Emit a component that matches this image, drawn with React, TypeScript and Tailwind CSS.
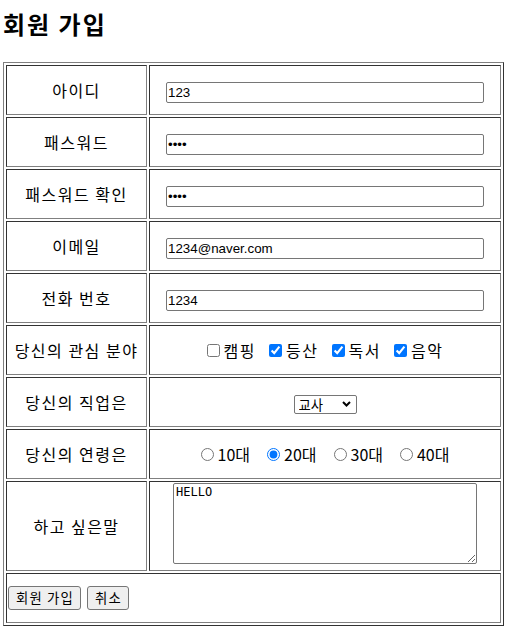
import React from 'react';

const cell =
  'border border-t-[#333333] border-l-[#333333] border-r-[#808080] border-b-[#808080] p-px';

const textInput =
  "w-[318px] h-[21px] border border-[#767676] rounded-[2px] px-px text-[13.33px] bg-white font-['Liberation_Sans','Noto_Sans_CJK_KR',sans-serif] text-black outline-none";

const btn =
  'h-[24px] pl-[7px] pr-[6px] border border-[#767676] rounded-[3px] bg-[#efefef] text-[13.33px] leading-[20px] tracking-[1.2px]';

function Row({ label, children }: { label: string; children: React.ReactNode }) {
  return (
    <tr>
      <td className={`${cell} h-[50px] w-[141px] text-center align-middle text-[16px] tracking-[1.5px]`}>{label}</td>
      <td className={`${cell} h-[50px] w-[352px] text-center align-middle`}>{children}</td>
    </tr>
  );
}

export default function App() {
  const hobbies = [
    { name: '캠핑', checked: false },
    { name: '등산', checked: true },
    { name: '독서', checked: true },
    { name: '음악', checked: true },
  ];
  const ages = ['10대', '20대', '30대', '40대'];

  return (
    <div className="w-[509px] h-[635px] bg-white pl-[3px] text-black font-['Noto_Sans_CJK_KR',sans-serif]">
      <h2 className="mt-[10px] mb-[24px] text-[24px] leading-[28px] font-bold tracking-[2px]">회원 가입</h2>

      <table className="table-fixed w-[501px] border-separate border-spacing-[2px] border border-t-[#808080] border-l-[#808080] border-r-[#333333] border-b-[#333333]">
        <tbody>
          <Row label="아이디">
            <input type="text" defaultValue="123" className={`${textInput} bg-[#e8f0fe] align-middle`} />
          </Row>
          <Row label="패스워드">
            <input type="password" defaultValue="1234" className={`${textInput} align-middle`} />
          </Row>
          <Row label="패스워드 확인">
            <input type="password" defaultValue="1234" className={`${textInput} align-middle`} />
          </Row>
          <Row label="이메일">
            <input type="email" defaultValue="1234@naver.com" className={`${textInput} align-middle`} />
          </Row>
          <Row label="전화 번호">
            <input type="tel" defaultValue="1234" className={`${textInput} align-middle`} />
          </Row>

          {/* 관심 분야 체크박스 */}
          <Row label="당신의 관심 분야">
            <div className="flex justify-center items-center gap-[13px] text-[16px] tracking-[1.5px]">
              {hobbies.map((h) => (
                <label key={h.name} className="flex items-center">
                  <input type="checkbox" defaultChecked={h.checked} className="m-0 w-[13px] h-[13px]" />
                  <span className="ml-[4px] leading-[20px]">{h.name}</span>
                </label>
              ))}
            </div>
          </Row>

          <Row label="당신의 직업은">
            <div className="relative inline-flex align-middle tracking-normal">
              <select
                defaultValue="교사"
                className="appearance-none w-[63px] h-[19px] border border-[#767676] rounded-[2px] bg-white pl-[4px] text-[13.33px] leading-[17px] text-black outline-none"
              >
                <option>교사</option>
                <option>학생</option>
                <option>의사</option>
              </select>
              <svg
                className="absolute right-[6px] top-[6px] pointer-events-none"
                width="9"
                height="6"
                viewBox="0 0 9 6"
              >
                <path d="M1 1 L4.5 4.5 L8 1" fill="none" stroke="#000" strokeWidth="2" />
              </svg>
            </div>
          </Row>

          {/* 연령 라디오 */}
          <Row label="당신의 연령은">
            <div className="flex justify-center items-center gap-[17px] text-[16px] tracking-normal">
              {ages.map((a) => (
                <label key={a} className="flex items-center">
                  <input type="radio" name="age" defaultChecked={a === '20대'} className="m-0 w-[13px] h-[13px]" />
                  <span className="ml-[4px] leading-[20px]">{a}</span>
                </label>
              ))}
            </div>
          </Row>

          <tr>
            <td className={`${cell} h-[90px] w-[141px] text-center align-middle text-[16px] tracking-[1.5px]`}>하고 싶은말</td>
            <td className={`${cell} h-[90px] w-[352px] align-top`}>
              <textarea
                defaultValue="HELLO"
                className="block mx-auto w-[304px] h-[81px] border border-[#767676] rounded-[2px] px-[2px] py-px text-[12px] leading-[15px] bg-white text-black font-['DejaVu_Sans_Mono',monospace] outline-none"
              />
            </td>
          </tr>

          <tr>
            <td colSpan={2} className={`${cell} h-[50px] align-middle`}>
              <div className="flex items-center gap-[6px]">
                <button className={btn}>회원 가입</button>
                <button className={btn}>취소</button>
              </div>
            </td>
          </tr>
        </tbody>
      </table>
    </div>
  );
}
